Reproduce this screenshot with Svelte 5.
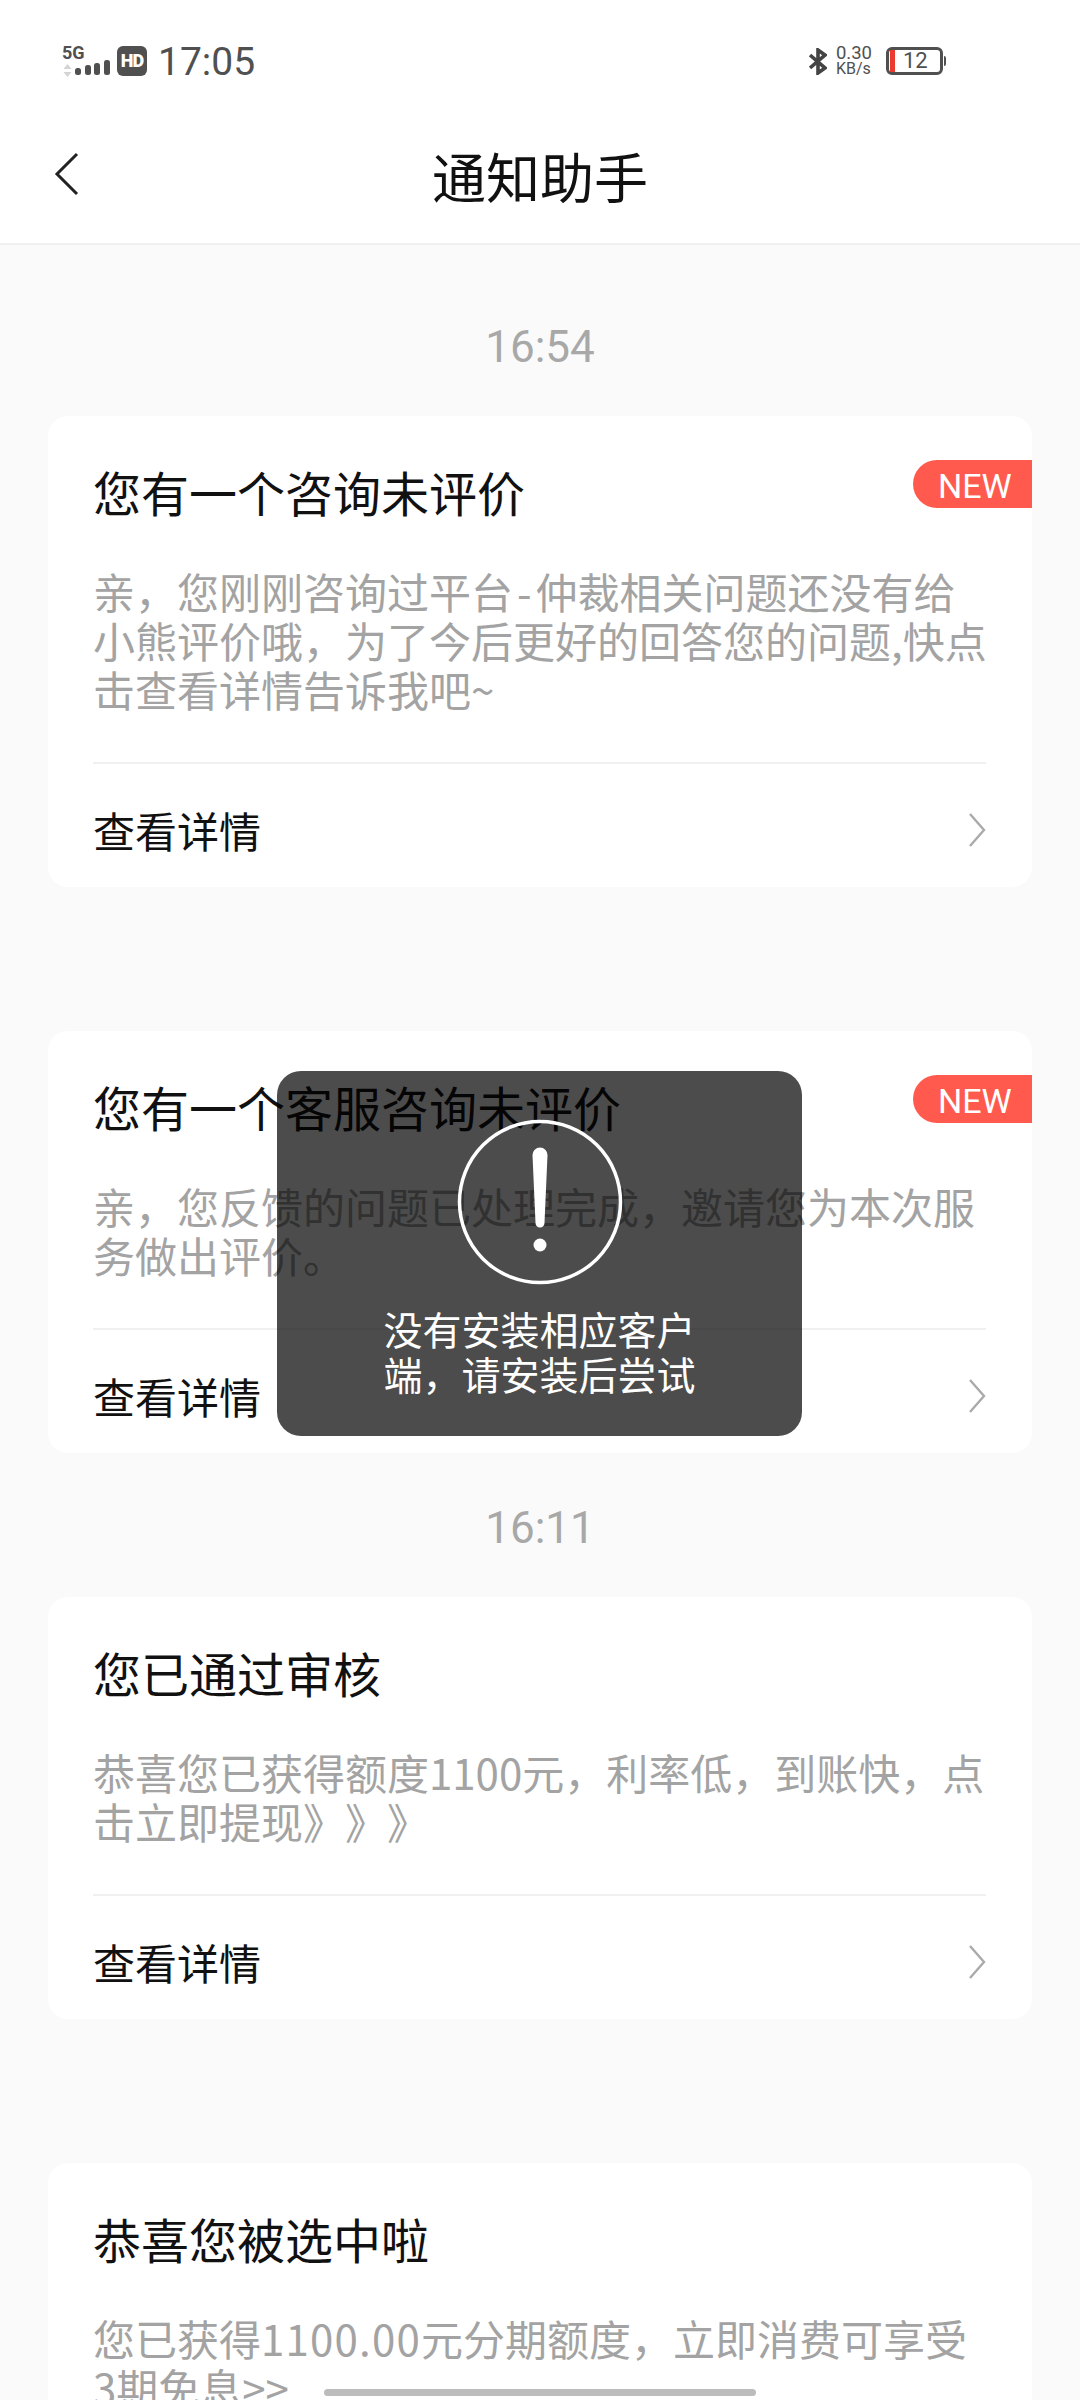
<script lang="ts">
  const groups = [
    {
      time: '16:54',
      title: '您有一个咨询未评价',
      lines: ['亲\uFF0C您刚刚咨询过平台-仲裁相关问题还没有给', '小熊评价哦\uFF0C为了今后更好的回答您的问题,快点', '击查看详情告诉我吧~'],
      isNew: true
    },
    {
      time: '',
      title: '您有一个客服咨询未评价',
      lines: ['亲\uFF0C您反馈的问题已处理完成\uFF0C邀请您为本次服', '务做出评价。'],
      isNew: true
    },
    {
      time: '16:11',
      title: '您已通过审核',
      lines: ['恭喜您已获得额度1100元\uFF0C利率低\uFF0C到账快\uFF0C点', '击立即提现》》》'],
      isNew: false
    },
    {
      time: '',
      title: '恭喜您被选中啦',
      lines: ['您已获得1100.00元分期额度\uFF0C立即消费可享受', '3期免息>>'],
      isNew: false
    }
  ];
  const toastText = '没有安装相应客户端\uFF0C请安装后尝试';

  // the hyphen and the decimal amount sit wider in the original font
  const pieces = (line: string) => line.split(/(-|\d+\.\d+)/);
</script>

<div class="screen">
  <header class="head">
    <div class="status">
      <div class="status-left">
        <div class="net">
          <span class="net-label">5G</span>
          <svg class="net-bars" width="48" height="17" viewBox="0 0 48 17">
            <path d="M5.500 4l4 5h-8zM5.500 17l4-5h-8z" fill="#d4d4d4" />
            <rect x="13" y="8" width="6" height="7" rx="2.500" fill="#505050" />
            <rect x="23" y="5" width="6" height="10" rx="2.500" fill="#505050" />
            <rect x="32" y="3" width="6" height="12" rx="2.500" fill="#505050" />
            <rect x="42" y="0" width="6" height="15" rx="2.500" fill="#505050" />
          </svg>
        </div>
        <span class="hd">HD</span>
        <span class="clock">17:05</span>
      </div>
      <div class="status-right">
        <svg width="18" height="27" viewBox="0 0 18 27" fill="none" stroke="#444" stroke-width="3.6">
          <path d="M1 7l15 13-7 5V2l7 5L1 20" />
        </svg>
        <div class="speed"><span>0.30</span><span class="unit">KB/s</span></div>
        <div class="battery">
          <span class="battery-level"></span>
          <span class="battery-num">12</span>
        </div>
        <span class="battery-cap"></span>
      </div>
    </div>
    <div class="nav">
      <svg class="back" width="26" height="44" viewBox="0 0 26 44" fill="none" stroke="#222" stroke-width="3">
        <path d="M23 2L3 22l20 20" />
      </svg>
      <h1>通知助手</h1>
    </div>
  </header>

  <main class="list">
    {#each groups as g}
      <div class="time">{g.time}</div>
      <section class="card">
        {#if g.isNew}<span class="badge">NEW</span>{/if}
        <h2>{g.title}</h2>
        <p>
          {#each g.lines as line}
            {#each pieces(line) as part, i}{#if i % 2 === 0}{part}{:else}<span class={part === '-' ? 'hyphen' : 'amount'}>{part}</span>{/if}{/each}<br />
          {/each}
        </p>
        <div class="more">
          <span>查看详情</span>
          <svg width="18" height="34" viewBox="0 0 18 34" fill="none" stroke="#aaa" stroke-width="2.4">
            <path d="M2 1l14 16L2 33" />
          </svg>
        </div>
      </section>
    {/each}
  </main>

  <div class="toast">
    <svg width="166" height="166" viewBox="0 0 166 166">
      <circle cx="83" cy="83" r="80.5" fill="none" stroke="#fff" stroke-width="3.5" />
      <path d="M75.5 36a7.5 7.5 0 0 1 15 0l-3 68a4.500 4.500 0 0 1-9 0z" fill="#fff" />
      <circle cx="83" cy="126" r="6.500" fill="#fff" />
    </svg>
    <div class="toast-text">{toastText}</div>
  </div>

  <div class="home-bar"></div>
</div>

<style>
  :global(body) {
    margin: 0;
  }

  .screen {
    position: relative;
    width: 1080px;
    height: 2400px;
    overflow: hidden;
    background: #fafafa;
    font-family: "Noto Sans CJK SC", "Noto Sans", sans-serif;
    text-spacing-trim: space-all;
  }

  /* header */
  .head {
    height: 243px;
    background: #fff;
    border-bottom: 2px solid #f0f0f0;
  }
  .status {
    display: flex;
    justify-content: space-between;
    align-items: center;
    height: 122px;
    padding: 0 134px 0 62px;
    color: #505050;
    font-family: Roboto, "Liberation Sans", sans-serif;
  }
  .status-left,
  .status-right {
    display: flex;
    align-items: center;
  }
  .net {
    display: flex;
    flex-direction: column;
    width: 48px;
    margin-right: 7px;
  }
  .net-label {
    font-size: 18px;
    line-height: 14px;
    font-weight: 700;
  }
  .hd {
    width: 30px;
    height: 30px;
    border-radius: 6px;
    background: #505050;
    color: #fff;
    font-size: 18px;
    font-weight: 900;
    line-height: 30px;
    letter-spacing: -1px;
    text-align: center;
  }
  .clock {
    margin: 2px 0 0 11px;
    font-size: 39px;
  }
  .speed {
    display: flex;
    flex-direction: column;
    margin-left: 9px;
    font-size: 18.500px;
    line-height: 15.500px;
  }
  .speed .unit {
    font-size: 16px;
  }
  .battery {
    position: relative;
    width: 57px;
    height: 28px;
    margin-left: 14px;
    box-sizing: border-box;
    border: 3px solid #505050;
    border-radius: 6px;
    background: #fff;
  }
  .battery-level {
    position: absolute;
    left: 1px;
    top: 0;
    bottom: 0;
    width: 5px;
    background: #ec3a2f;
  }
  .battery-num {
    position: absolute;
    left: 14px;
    top: -1px;
    font-size: 22px;
    line-height: 24px;
  }
  .battery-cap {
    width: 2px;
    height: 10px;
    margin-left: 1px;
    border-radius: 0 2px 2px 0;
    background: #505050;
  }
  .nav {
    position: relative;
    display: flex;
    justify-content: center;
    align-items: center;
    height: 123px;
    margin-top: -8px;
  }
  .back {
    position: absolute;
    left: 54px;
    top: 38px;
  }
  h1 {
    margin: 0;
    font-size: 54px;
    font-weight: 400;
    color: #111;
  }

  /* message list */
  .list {
    padding: 0 48px;
  }
  .time {
    display: flex;
    align-items: flex-end;
    justify-content: center;
    height: 100px;
    padding-bottom: 44px;
    box-sizing: border-box;
    color: #a8a8a8;
    font-family: Roboto, sans-serif;
    font-size: 44px;
    line-height: 50px;
  }
  .list > .time:first-child {
    height: 171px;
  }
  .card {
    position: relative;
    padding: 42px 46px 0 45px;
    border-radius: 20px;
    background: #fff;
  }
  .card + .time {
    height: 144px;
  }
  .badge {
    position: absolute;
    top: 44px;
    right: 0;
    width: 119px;
    height: 48px;
    padding-left: 25px;
    box-sizing: border-box;
    border-radius: 24px 0 0 24px;
    background: #ff5a4d;
    color: #fff;
    font-family: Roboto, sans-serif;
    font-size: 34px;
    line-height: 52px;
  }
  h2 {
    margin: 0;
    color: #111;
    font-size: 48px;
    font-weight: 400;
    line-height: 66px;
  }
  p {
    margin: 42px 0 0;
    padding-bottom: 49px;
    border-bottom: 2px solid #f0f0f0;
    color: #a3a3a3;
    font-size: 42px;
    line-height: 49px;
    white-space: nowrap;
  }
  .hyphen {
    padding: 0 4px;
  }
  .amount {
    letter-spacing: 1.2px;
  }
  .more {
    display: flex;
    justify-content: space-between;
    align-items: center;
    height: 123px;
    padding-top: 8px;
    box-sizing: border-box;
    color: #111;
    font-size: 42px;
  }

  /* toast over the list */
  .toast {
    position: absolute;
    left: 277px;
    top: 1071px;
    display: flex;
    flex-direction: column;
    align-items: center;
    width: 525px;
    height: 365px;
    padding-top: 48px;
    box-sizing: border-box;
    border-radius: 24px;
    background: rgba(0, 0, 0, 0.7);
    color: #fff;
  }
  .toast-text {
    width: 312px;
    margin-top: 21px;
    font-size: 39px;
    line-height: 45px;
  }

  .home-bar {
    position: absolute;
    left: 324px;
    bottom: 4px;
    width: 432px;
    height: 7px;
    border-radius: 4px;
    background: #bcbcbc;
  }
</style>
